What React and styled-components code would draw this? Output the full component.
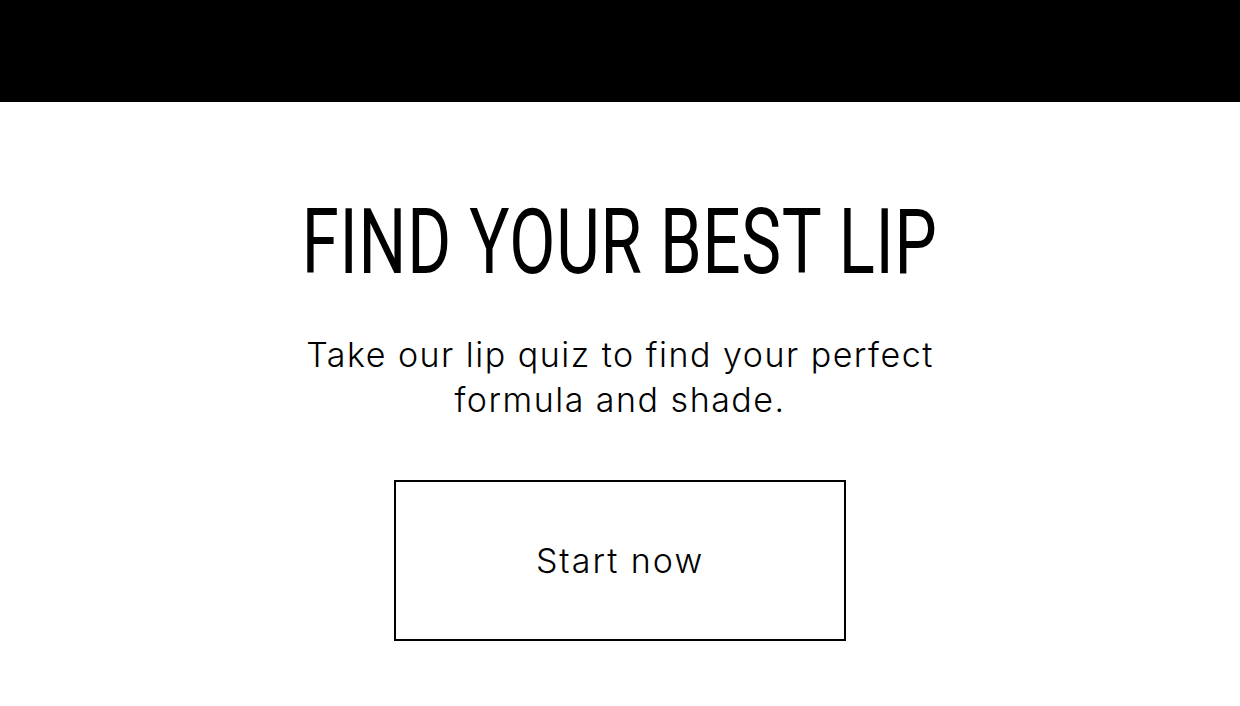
import React from 'react';
import styled, { createGlobalStyle } from 'styled-components';

const GlobalStyle = createGlobalStyle`
  html, body {
    margin: 0;
    padding: 0;
    background: #fff;
  }
  body {
    font-family: Inter, "Liberation Sans", sans-serif;
    color: #000;
  }
`;

const TopBar = styled.header`
  height: 102px;
  background: #000;
`;

const Section = styled.section`
  display: flex;
  flex-direction: column;
  align-items: center;
  padding-top: 96px;
`;

const Title = styled.h1`
  margin: 0;
  font-family: Roboto, sans-serif;
  font-weight: 400;
  font-size: 90px;
  line-height: 90px;
  letter-spacing: 1px;
  white-space: nowrap;
  transform: scaleX(0.745);
`;

const Lead = styled.p`
  margin: 44px 0 0;
  max-width: 700px;
  text-align: center;
  font-family: Inter, sans-serif;
  font-weight: 300;
  font-size: 34px;
  line-height: 45px;
  letter-spacing: 1.5px;
`;

const StartButton = styled.button`
  margin-top: 58px;
  width: 452px;
  height: 161px;
  background: #fff;
  border: 2px solid #000;
  font-family: Inter, sans-serif;
  font-weight: 300;
  font-size: 34px;
  letter-spacing: 2px;
  color: #000;
  cursor: pointer;
`;

export default function App() {
  return (
    <>
      <GlobalStyle />
      <TopBar />
      <Section>
        <Title>FIND YOUR BEST LIP</Title>
        <Lead>Take our lip quiz to find your perfect formula and shade.</Lead>
        <StartButton>Start now</StartButton>
      </Section>
    </>
  );
}
